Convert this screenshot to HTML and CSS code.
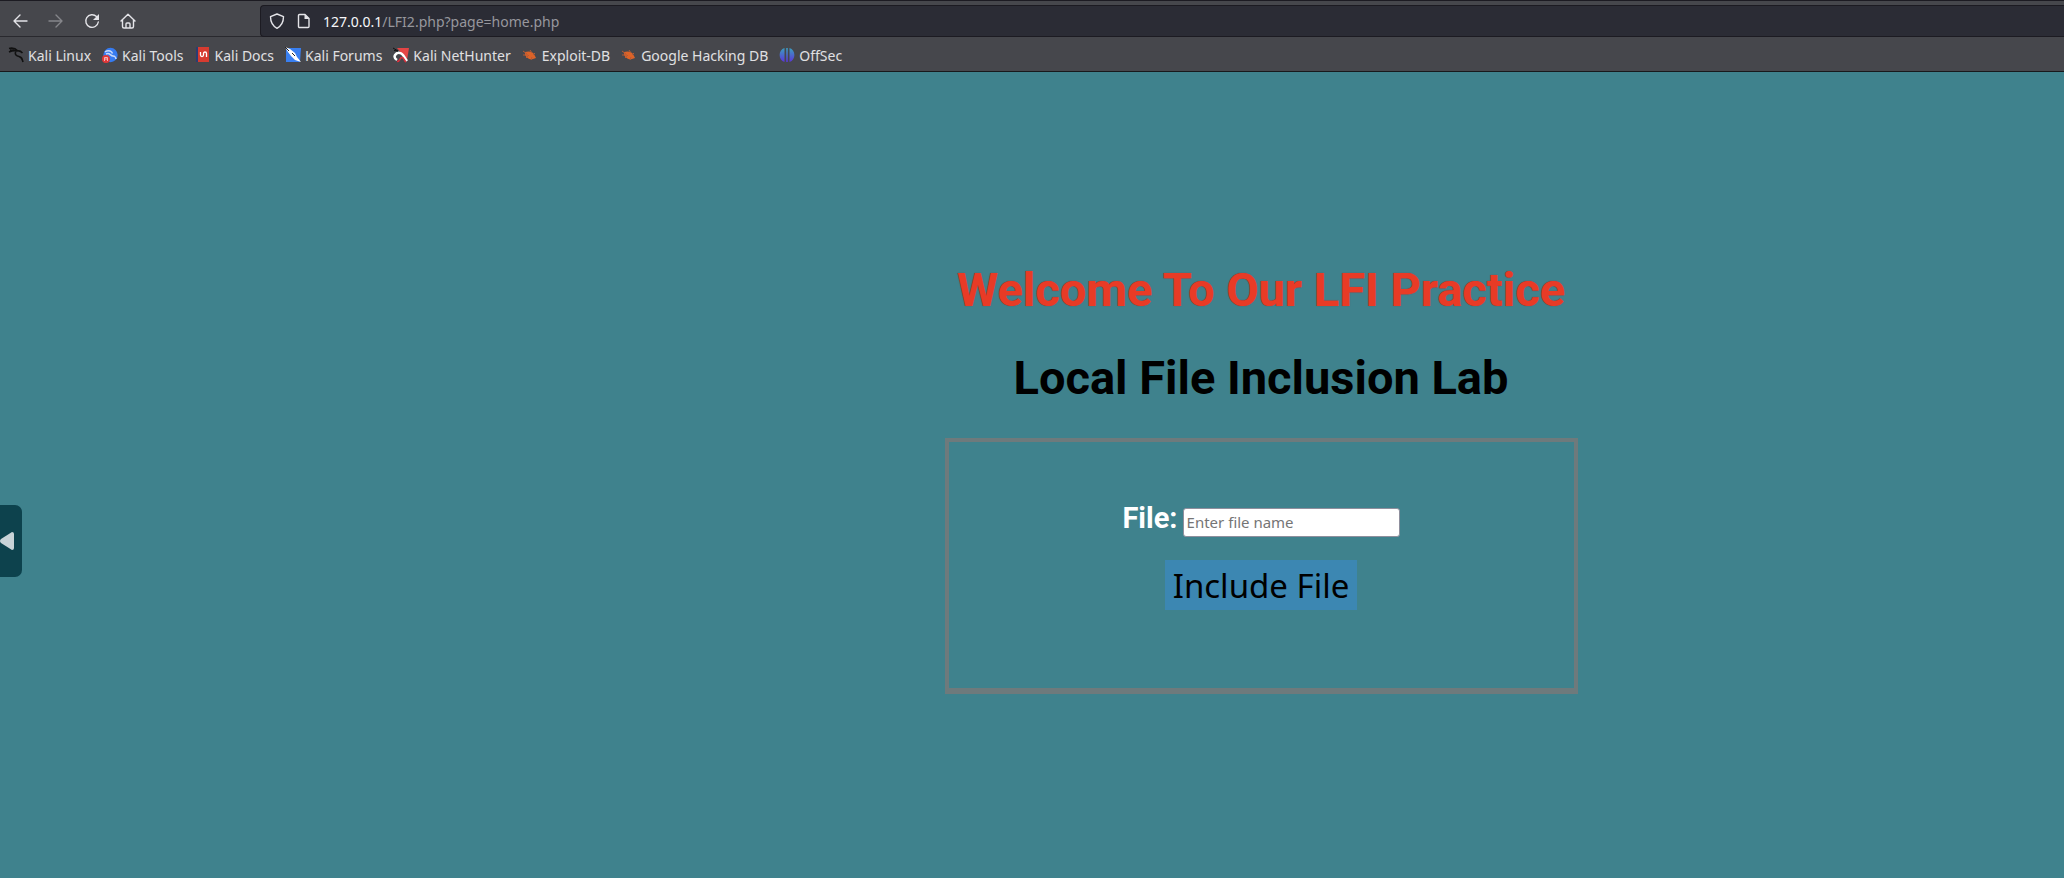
FILE: index.html
```html
<!DOCTYPE html>
<html lang="en">
<head>
<meta charset="utf-8">
<title>LFI Practice</title>
<link rel="stylesheet" href="styles.css">
</head>
<body>
<header class="browser">
  <div class="toolbar">
    <nav class="nav" aria-label="Navigation">
      <button class="nav-btn" type="button" aria-label="Back"><svg viewBox="0 0 16 16"><path d="M15 8H2M8 2L2 8l6 6"/></svg></button>
      <button class="nav-btn dim" type="button" aria-label="Forward"><svg viewBox="0 0 16 16"><path d="M1 8h13M8 2l6 6-6 6"/></svg></button>
      <button class="nav-btn" type="button" aria-label="Reload"><svg viewBox="0 0 16 16"><path d="M14.300 9A6.300 6.300 0 1 1 12.500 3.600"/><path class="solid" d="M15 1v6H9z"/></svg></button>
      <button class="nav-btn" type="button" aria-label="Home"><svg viewBox="0 0 16 16"><path d="M1 8l7-6.800L15 8M2.500 7v6.500a1.500 1.500 0 0 0 1.500 1.500h8a1.500 1.500 0 0 0 1.500-1.500V7M6 15v-4a1 1 0 0 1 1-1h2a1 1 0 0 1 1 1v4"/></svg></button>
    </nav>
    <div class="address">
      <svg viewBox="0 0 16 16"><path d="M8 1l6.500 2.600C14.500 9 12.500 13 8 15.300 3.500 13 1.500 9 1.500 3.600z"/></svg>
      <svg viewBox="0 0 16 16"><path d="M3.500 1.500h5.500l4 4v8a1 1 0 0 1-1 1h-8.500a1 1 0 0 1-1-1v-11a1 1 0 0 1 1-1z"/><path class="solid" d="M8.500 1v5H13.500z"/></svg>
      <span class="url"><span class="host">127.0.0.1</span>/LFI2.php?page=home.php</span>
    </div>
  </div>
  <nav class="bookmarks" aria-label="Bookmarks">
    <a href="#"><svg viewBox="0 0 16 16"><path d="M1 1.500C5 .5 8 2 10 4M1 5c4-2 7-1.500 9-1M10 4c2-.5 3 .5 4.500 2M8 4C6 8 9 9 11 9.500c3 .7 3 2 4 5.500M2 3l4 .5" fill="none" stroke="#111" stroke-width="1.600"/></svg>Kali Linux</a>
    <a href="#"><svg viewBox="0 0 16 16"><circle cx="8.500" cy="8" r="7.200" fill="#367bf0"/><path d="M3 5c4-3 7 0 7.500 1.500M4 7c4-2 4 2 7 2 2 0 3 2 3 3" fill="none" stroke="#c8dafa" stroke-width="1.500"/><circle cx="4" cy="12" r="4" fill="#e13838"/><path d="M2.500 14v-3.500h3V14M4 11v2" fill="none" stroke="#f5b3b3"/></svg>Kali Tools</a>
    <a href="#"><svg viewBox="0 0 16 16"><path d="M1 0h13v15H1z" fill="#d63b30"/><path d="M1 0h2v15H1z" fill="#2b3c72"/><path d="M5.500 5v3q0 1.500 1.500 1.500T8.500 8V6.500Q8.500 5 10 5t1.500 1.500V10" fill="none" stroke="#fff" stroke-width="1.300"/></svg>Kali Docs</a>
    <a href="#"><svg viewBox="0 0 16 16"><path d="M1 1h15l-1 14H1z" fill="#397ff0"/><path d="M0 0l5 2 5 4 2 4 4 5-6-2-4-4-3-4z" fill="#fff"/><path d="M0 0l4 4M7 6l3 3" stroke="#222"/></svg>Kali Forums</a>
    <a href="#"><svg viewBox="0 0 16 16"><path d="M4 1h12l-2 12z" fill="#e44545"/><path d="M4 13C-1 10 3 5 7 6c3 .5 4 4 7 8" fill="none" stroke="#fff" stroke-width="2.500"/><path d="M4 14.500c4 0 2-4 5-4 2 0 2 3 4 4.500" fill="none" stroke="#d62f3c" stroke-width="1.600"/><path d="M0 1l5 3-4-.5" stroke="#111" fill="none"/></svg>Kali NetHunter</a>
    <a href="#"><svg viewBox="0 0 16 16"><path d="M3 5c3-1 7-1 9 2l2 4-3 1c-4 1-6-1-8-4z" fill="#dc6328"/><path d="M1 4l4 3M8 3l2 3M1 8h5M4 11l3-3M9 13l1-3M13 6l-2 2" stroke="#b65a35"/></svg>Exploit-DB</a>
    <a href="#"><svg viewBox="0 0 16 16"><path d="M3 5c3-1 7-1 9 2l2 4-3 1c-4 1-6-1-8-4z" fill="#dc6328"/><path d="M1 4l4 3M8 3l2 3M1 8h5M4 11l3-3M9 13l1-3M13 6l-2 2" stroke="#b65a35"/></svg>Google Hacking DB</a>
    <a href="#"><svg viewBox="0 0 16 16"><defs><linearGradient id="off" x2="0" y2="1"><stop stop-color="#3b9ec0"/><stop offset="1" stop-color="#5a35d8"/></linearGradient></defs><path d="M5.500 1v14C-1 13-1 3 5.500 1zM7.200 1h1.600v14H7.200zM10.500 1c6.500 2 6.500 12 0 14z" fill="url(#off)"/></svg>OffSec</a>
  </nav>
</header>
<main class="page">
  <button class="side-tab" type="button" aria-label="Open panel"><svg viewBox="0 0 14 18"><path d="M12 0q2 0 2 2v14q0 2-2 2L1 11q-2-2 0-4z"/></svg></button>
  <div class="content">
    <h1 class="title welcome">Welcome To Our LFI Practice</h1>
    <h2 class="title">Local File Inclusion Lab</h2>
    <form class="panel">
      <div class="field">
        <label for="file">File:</label>
        <input id="file" type="text" placeholder="Enter file name">
      </div>
      <button class="submit" type="button">Include File</button>
    </form>
  </div>
</main>
</body>
</html>
```
FILE: styles.css
```css
* { box-sizing: border-box; }
body {
  margin: 0;
  min-height: 100vh;
  display: flex;
  flex-direction: column;
  background: #3f828d;
  font-family: "Noto Sans", sans-serif;
}
button { border: 0; padding: 0; background: none; }
.browser {
  background: #46474c;
  border-top: 1px solid #1c1b22;
  border-bottom: 1px solid #18191c;
}
.toolbar {
  display: flex;
  height: 36px;
  padding: 4px 0 0 12px;
  border-bottom: 1px solid #29292e;
}
.nav { display: flex; gap: 20px; width: 248px; height: 32px; align-items: center; }
.nav-btn { width: 16px; height: 16px; }
.nav-btn svg, .address svg {
  display: block;
  width: 16px;
  height: 16px;
  fill: none;
  stroke: #e4e4e8;
  stroke-width: 1.4;
  stroke-linecap: round;
  stroke-linejoin: round;
}
.nav-btn .solid, .address .solid { fill: #e4e4e8; stroke: none; }
.dim { opacity: 0.4; }
.address {
  flex: 1;
  display: flex;
  align-items: center;
  gap: 11px;
  height: 32px;
  padding-left: 8px;
  background: #2b2c35;
  border: 1px solid #1c1b22;
  border-right: 0;
  border-radius: 4px 0 0 4px;
}
.url { font-size: 14px; color: #97979d; }
.host { color: #f7f7fa; }
.bookmarks {
  display: flex;
  align-items: center;
  gap: 11px;
  height: 34px;
  padding: 2px 8px 0;
  font-size: 14px;
}
.bookmarks a {
  display: flex;
  align-items: center;
  gap: 4px;
  color: #e0e0e2;
  text-decoration: none;
  white-space: nowrap;
}
.bookmarks svg { width: 16px; height: 16px; }
.page { flex: 1; position: relative; padding: 190px 0 0 458px; }
.side-tab {
  position: absolute;
  left: 0;
  top: 433px;
  width: 22px;
  height: 72px;
  background: #0d424d;
  border-radius: 0 7px 7px 0;
}
.side-tab svg { display: block; width: 14px; height: 18px; fill: #c8d3d7; }
.content { display: flex; flex-direction: column; align-items: center; }
.title {
  margin: 0 0 32px;
  font: bold 47px/56px Roboto, sans-serif;
  color: #000;
}
.welcome { color: #e83b26; text-shadow: 0 0 1px #a02020; }
.panel {
  display: flex;
  flex-direction: column;
  align-items: center;
  width: 633px;
  padding: 58px 0 78px;
  border: 4px solid #6e7a7c;
  border-bottom-width: 6px;
}
.field { display: flex; align-items: baseline; gap: 5px; }
.field label { font: bold 29px/36px Roboto, sans-serif; color: #fff; }
.field input {
  width: 217px;
  height: 29px;
  padding: 0 3px;
  border: 1px solid #8f8f9d;
  border-radius: 3px;
  background: #fff;
  font: 15px/24px "Noto Sans", sans-serif;
}
.field input::placeholder { color: #757575; }
.submit {
  margin-top: 23px;
  height: 50px;
  padding: 2px 8px 0;
  background: #3c87b2;
  color: #000;
  font: 33px/48px "Noto Sans", sans-serif;
}
```
